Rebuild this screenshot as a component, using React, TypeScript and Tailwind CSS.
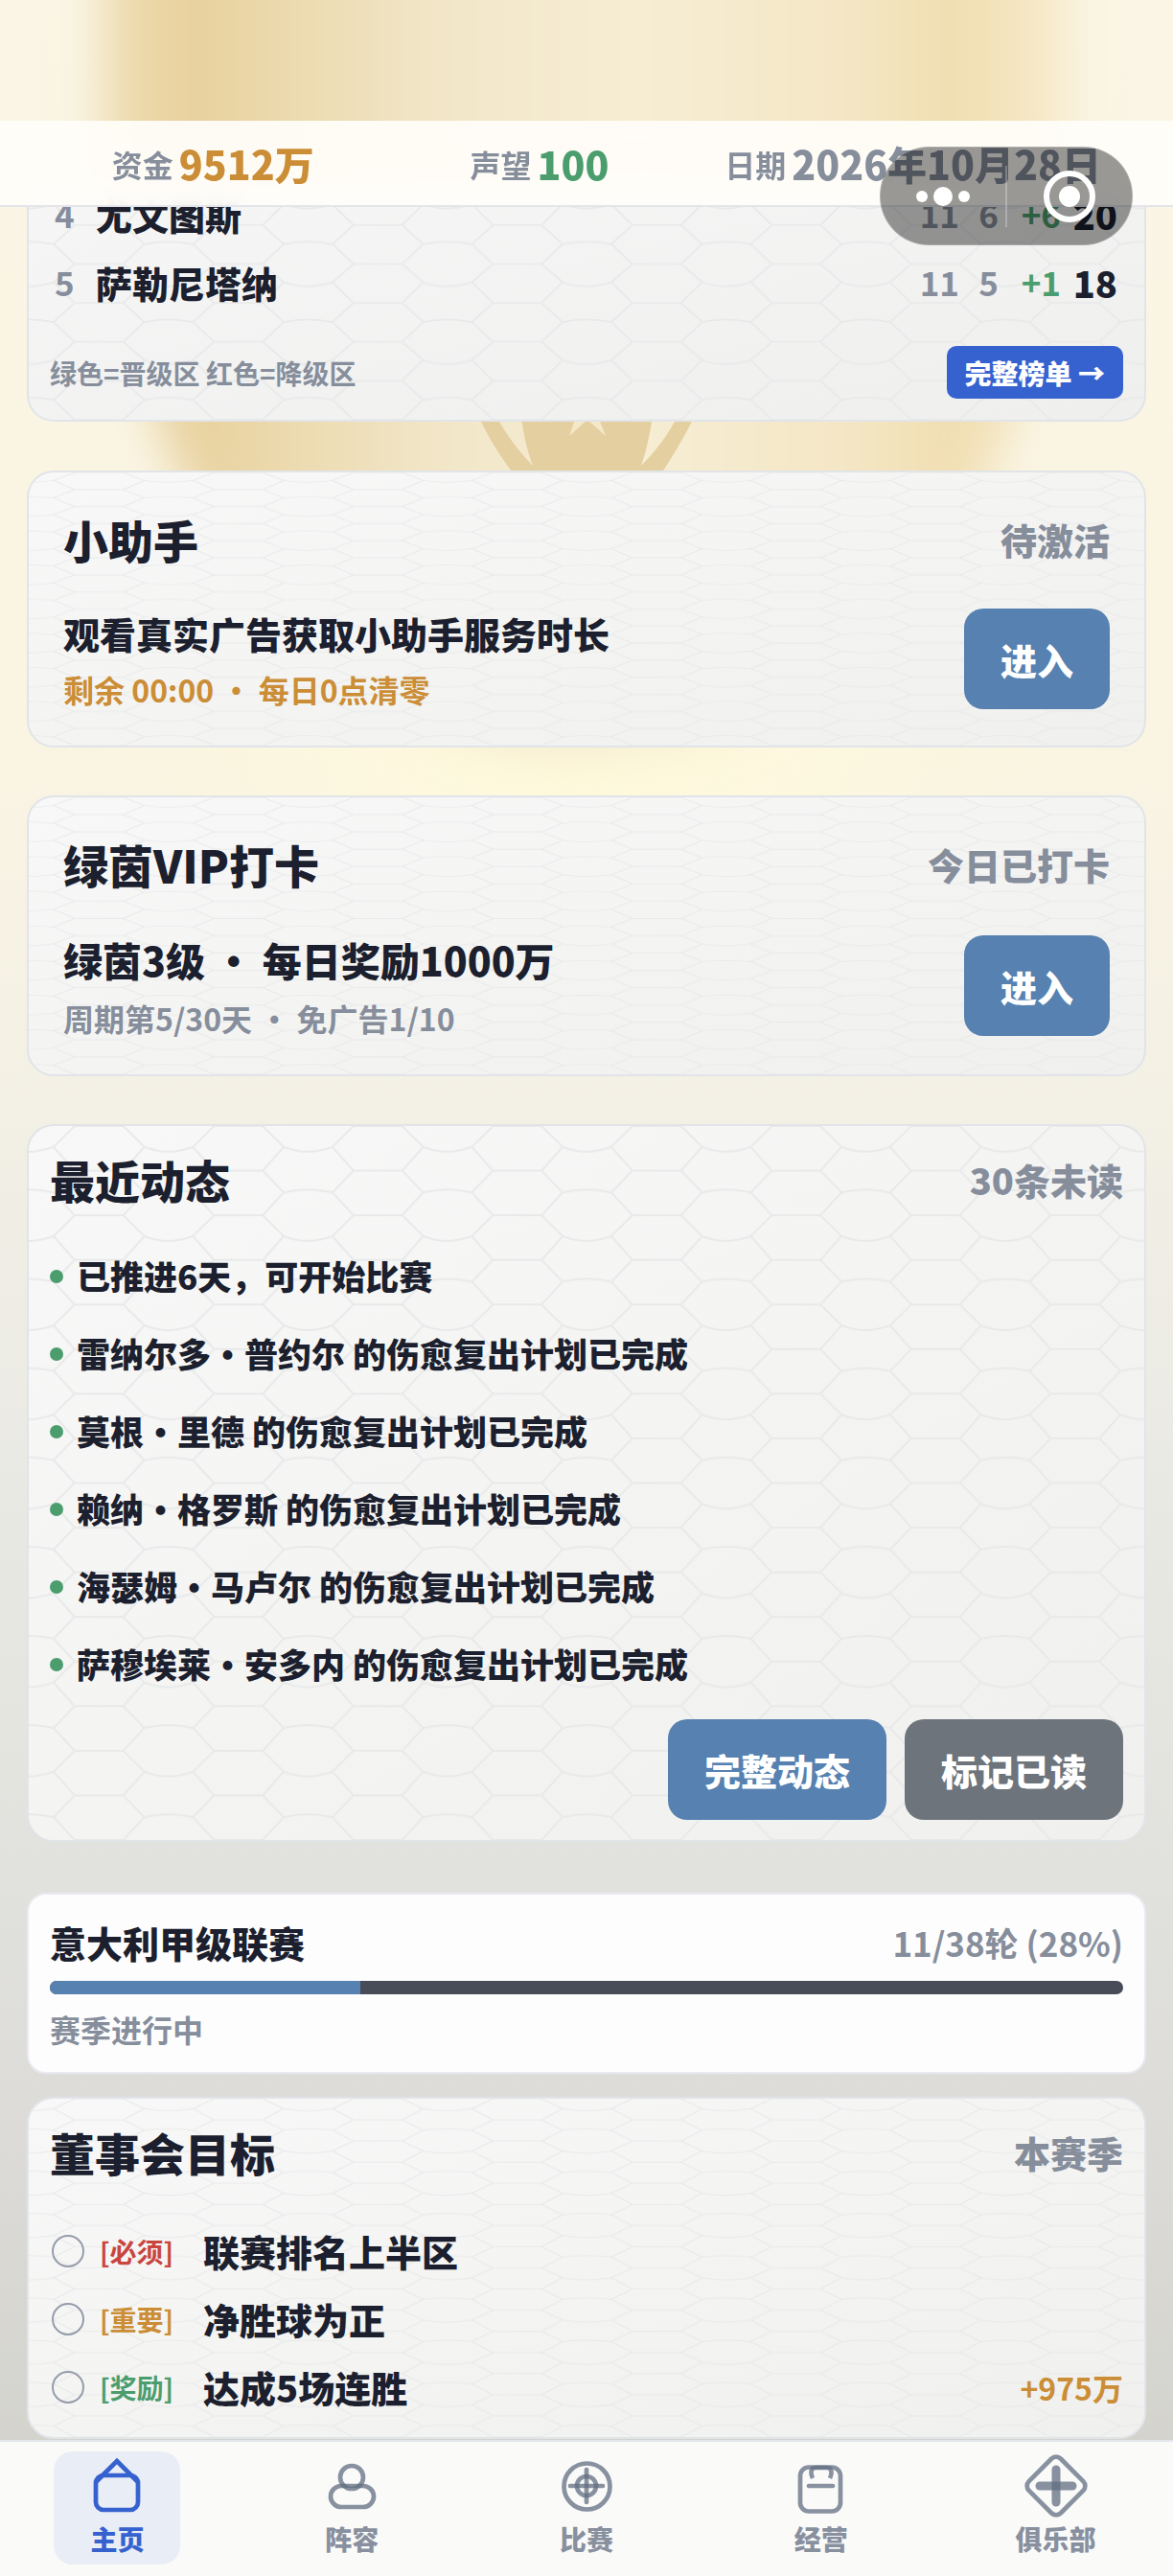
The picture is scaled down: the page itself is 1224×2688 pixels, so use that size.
import { useState } from "react";
import type { ReactNode } from "react";
import clsx from "clsx";

const equipos = [
    { pos: 4, nombre: "尤文图斯", pj: 11, pg: 6, dif: "+6", pts: 20 },
    { pos: 5, nombre: "萨勒尼塔纳", pj: 11, pg: 5, dif: "+1", pts: 18 },
];

const noticias = [
    "已推进6天，可开始比赛",
    "雷纳尔多・普约尔 的伤愈复出计划已完成",
    "莫根・里德 的伤愈复出计划已完成",
    "赖纳・格罗斯 的伤愈复出计划已完成",
    "海瑟姆・马卢尔 的伤愈复出计划已完成",
    "萨穆埃莱・安多内 的伤愈复出计划已完成",
];

const objetivos = [
    { id: "rank", tag: "[必须]", color: "text-[#c9453f]", texto: "联赛排名上半区", premio: "" },
    { id: "goals", tag: "[重要]", color: "text-[#cb8d35]", texto: "净胜球为正", premio: "" },
    { id: "streak", tag: "[奖励]", color: "text-[#4c9d6e]", texto: "达成5场连胜", premio: "+975万" },
];

// Textura hexagonal de las tarjetas: 8 x 8 celdas estiradas al tamaño
function HexTexture({ id, className = "h-full" }: { id: string; className?: string }) {
    return (
        <svg
            className={clsx("pointer-events-none absolute inset-x-0 bottom-0 w-full", className)}
            viewBox="0 0 1168 752"
            preserveAspectRatio="none"
            aria-hidden="true"
        >
            <defs>
                <pattern id={id} width="146" height="94" patternUnits="userSpaceOnUse">
                    <path
                        d="M48 0H99M48 94H99M48 47H99M48 0L26 22Q12 27 0 27M99 0L121 22Q134 27 146 27M26 22L48 47L26 70L48 94M121 22L99 47L121 70L99 94M26 70Q12 67 0 67M121 70Q134 67 146 67"
                        fill="none"
                        stroke="#e8e9e9"
                        strokeWidth="2"
                    />
                </pattern>
            </defs>
            <rect width="1168" height="752" fill={`url(#${id})`} />
        </svg>
    );
}

// Fondo con la copa dorada
function Backdrop() {
    return (
        <svg
            className="pointer-events-none absolute inset-x-0 top-0 h-[1200px] w-full"
            viewBox="0 0 1224 1200"
            preserveAspectRatio="xMidYMin slice"
            aria-hidden="true"
        >
            <defs>
                <linearGradient id="cup" x1="0" x2="1">
                    <stop offset="0" stopColor="#f0e0b6" />
                    <stop offset="0.09" stopColor="#e7d09c" />
                    <stop offset="0.2" stopColor="#ecdbb0" />
                    <stop offset="0.35" stopColor="#f2e6c8" />
                    <stop offset="0.55" stopColor="#f6edd4" />
                    <stop offset="0.78" stopColor="#f4e6c4" />
                    <stop offset="0.88" stopColor="#f1ddb0" />
                    <stop offset="1" stopColor="#f7edcf" />
                </linearGradient>
                <radialGradient id="glow">
                    <stop offset="0" stopColor="#fffadc" />
                    <stop offset="1" stopColor="#fffadc" stopOpacity="0" />
                </radialGradient>
                <filter id="soft" x="-20%" y="-20%" width="140%" height="140%">
                    <feGaussianBlur stdDeviation="24" />
                </filter>
            </defs>
            <ellipse cx="612" cy="800" rx="560" ry="260" fill="url(#glow)" />
            <path
                d="M105 -80 V180 C115 330 170 500 260 600 C380 740 500 785 612 790 C724 785 850 740 960 600 C1050 500 1110 330 1118 180 V-80Z"
                fill="url(#cup)"
                filter="url(#soft)"
            />
            <path d="M494 420Q506 456 540 500H686Q716 456 731 420H713Q700 455 669 486Q678 460 683 420H542Q546 460 556 486Q526 455 511 420Z" fill="#e3cfa0" />
            <path d="M612 405L623 432L632 455L613 438L594 455L602 432Z" fill="#f5e8c8" />
        </svg>
    );
}

function Card({ id, className, children }: { id: string; className?: string; children: ReactNode }) {
    return (
        <section
            className={clsx(
                "relative overflow-hidden rounded-[28px] border-2 border-[#e1e4e8] bg-linear-to-br from-[#f8f8f8] to-[#f0f0ee]",
                className
            )}
        >
            <HexTexture id={id} />
            <div className="relative">{children}</div>
        </section>
    );
}

function CardTitle({ title, note }: { title: string; note: string }) {
    return (
        <div className="flex items-center justify-between leading-[70px]">
            <h2 className="text-[47px]">{title}</h2>
            <span className="text-[38px] text-[#868e9c]">{note}</span>
        </div>
    );
}

function ActionButton({ children, gray }: { children: ReactNode; gray?: boolean }) {
    return (
        <button
            type="button"
            className={clsx(
                "h-[105px] shrink-0 rounded-[20px] px-[38px] text-[38px] text-white",
                gray ? "bg-[#6d747c]" : "bg-[#5681b0]"
            )}
        >
            {children}
        </button>
    );
}

const tabs = [
    {
        label: "主页",
        icon: (
            <>
                <rect x="8" y="19" width="44" height="36" rx="8" />
                <path d="M7 27L30 4L53 27" />
            </>
        ),
    },
    {
        label: "阵容",
        icon: (
            <>
                <circle cx="30" cy="21" r="12" />
                <rect x="8" y="30" width="45" height="22" rx="11" />
            </>
        ),
    },
    {
        label: "比赛",
        icon: (
            <>
                <circle cx="30.5" cy="30.5" r="24" />
                <circle cx="30" cy="30" r="10" />
                <path d="M30 13V47" strokeLinecap="round" />
                <path d="M13 30H47" strokeLinecap="round" />
            </>
        ),
    },
    {
        label: "经营",
        icon: (
            <>
                <rect x="8" y="10.5" width="42" height="46" rx="9" />
                <path d="M21 22Q19 18 19.500 15Q20 11 24 11H36Q40 11 40.500 15Q41 18 39 22" />
                <path d="M17 30H42" strokeLinecap="round" />
            </>
        ),
    },
    {
        label: "俱乐部",
        icon: (
            <>
                <rect x="6.500" y="6.500" width="47" height="47" rx="7" transform="rotate(45 30 30)" />
                <path d="M30 13V47" strokeWidth="9" strokeLinecap="round" />
                <path d="M13 30H47" strokeWidth="9" strokeLinecap="round" />
            </>
        ),
    },
];

export default function App() {
    const [activeTab, setActiveTab] = useState("主页");

    return (
        <div className="relative flex min-h-screen flex-col bg-[linear-gradient(to_bottom,#faf5e5_0%,#faf4e2_28%,#f3f0e5_43%,#e9e9e4_58%,#e1e1dd_73%,#dcdbd8_83%,#d3d3cc_96%)] font-['Noto_Sans_CJK_SC',sans-serif] font-black text-[#1c1f2e]">
            <Backdrop />

            {/* Barra superior */}
            <header className="relative z-10 mt-[126px] flex h-[90px] items-center border-b-2 border-[#e3e5ea] bg-[#fffdf9]/95 px-[52px] pt-[2px] whitespace-nowrap backdrop-blur-sm">
                <div className="flex flex-1 items-center justify-center gap-[6px] px-[23px]">
                    <span className="text-[32px] font-bold text-[#868e9c]">资金</span>
                    <span className="text-[41px] text-[#cb8d35]">9512万</span>
                </div>
                <div className="flex flex-1 items-center justify-center gap-[6px] px-[23px]">
                    <span className="text-[32px] font-bold text-[#868e9c]">声望</span>
                    <span className="text-[41px] text-[#4c9d6e]">100</span>
                </div>
                <div className="flex flex-1 items-center justify-center gap-[6px] px-[23px] text-[#868e9c]">
                    <span className="text-[32px] font-bold">日期</span>
                    <span className="text-[41px]">2026年10月28日</span>
                </div>
            </header>

            {/* Cápsula de la mini app */}
            <div className="absolute top-[153px] right-[42px] z-20 flex h-[103px] w-[264px] items-center rounded-full border border-white/20 bg-black/40">
                <button type="button" aria-label="更多" className="flex flex-1 items-center justify-center gap-[6px]">
                    <span className="size-3 rounded-full bg-white" />
                    <span className="size-5 rounded-full bg-white" />
                    <span className="size-3 rounded-full bg-white" />
                </button>
                <span className="h-16 w-[2px] bg-white/25" />
                <button type="button" aria-label="关闭" className="flex flex-1 items-center justify-center">
                    <span className="flex size-[54px] items-center justify-center rounded-full border-[6px] border-white">
                        <span className="size-[22px] rounded-full bg-white" />
                    </span>
                </button>
            </div>

            <main className="relative flex flex-1 flex-col px-7">
                {/* Clasificación */}
                <section className="relative -mt-7 overflow-hidden rounded-b-[28px] border-2 border-t-0 border-[#e1e4e8] bg-linear-to-br from-[#f6f6f6] to-[#efefee] px-[22px] pb-[22px]">
                    <HexTexture id="hex-table" className="h-[650px]" />
                    <table className="relative w-full">
                        <tbody>
                            {equipos.map((equipo) => (
                                <tr key={equipo.pos} className="h-[71px] text-right text-[35px] font-bold text-[#868e9c]">
                                    <td className="w-12 pl-[5px] text-left">{equipo.pos}</td>
                                    <td className="text-left text-[38px] font-black text-[#1c1f2e]">{equipo.nombre}</td>
                                    <td className="w-12">{equipo.pj}</td>
                                    <td className="w-[41px]">{equipo.pg}</td>
                                    <td className="w-[65px] text-[#4c9d6e]">{equipo.dif}</td>
                                    <td className="w-[65px] pr-[6px] text-[38px] font-black text-[#1c1f2e]">{equipo.pts}</td>
                                </tr>
                            ))}
                        </tbody>
                    </table>
                    <div className="relative mt-[31px] flex items-center justify-between text-[28px]">
                        <span className="font-bold text-[#868e9c]">绿色=晋级区 红色=降级区</span>
                        <button type="button" className="h-[55px] rounded-[10px] bg-[#3662d0] px-[19px] text-white">
                            完整榜单 →
                        </button>
                    </div>
                </section>

                {/* Asistente */}
                <Card id="hex-helper" className="mt-[51px] px-9 py-[35px]">
                    <CardTitle title="小助手" note="待激活" />
                    <div className="mt-[34px] flex items-center justify-between">
                        <div>
                            <p className="text-[38px] leading-[57px]">观看真实广告获取小助手服务时长</p>
                            <p className="mt-[6px] text-[32px] leading-[48px] font-bold text-[#cb8d35]">剩余 00:00 · 每日0点清零</p>
                        </div>
                        <ActionButton>进入</ActionButton>
                    </div>
                </Card>

                {/* VIP */}
                <Card id="hex-vip" className="mt-[50px] px-9 py-[35px]">
                    <CardTitle title="绿茵VIP打卡" note="今日已打卡" />
                    <div className="mt-[34px] flex items-center justify-between">
                        <div>
                            <p className="text-[41px] leading-[61px]">绿茵3级 · 每日奖励1000万</p>
                            <p className="mt-[6px] text-[32px] leading-[48px] font-bold text-[#868e9c]">周期第5/30天 · 免广告1/10</p>
                        </div>
                        <ActionButton>进入</ActionButton>
                    </div>
                </Card>

                {/* Novedades */}
                <Card id="hex-news" className="mt-[50px] px-[22px] py-[21px]">
                    <CardTitle title="最近动态" note="30条未读" />
                    <ul className="mt-[25px]">
                        {noticias.map((noticia) => (
                            <li key={noticia} className="flex h-[81px] items-center gap-[14px] text-[35px]">
                                <span className="size-[14px] rounded-full bg-[#4c9d6e]" />
                                {noticia}
                            </li>
                        ))}
                    </ul>
                    <div className="mt-[17px] flex justify-end gap-[19px]">
                        <ActionButton>完整动态</ActionButton>
                        <ActionButton gray>标记已读</ActionButton>
                    </div>
                </Card>

                {/* Progreso de la liga */}
                <section className="mt-[53px] rounded-[20px] border-2 border-[#e8eaf1] bg-[#fdfdfd] px-[22px] py-[21px]">
                    <div className="flex items-center justify-between leading-[57px]">
                        <h2 className="text-[38px]">意大利甲级联赛</h2>
                        <span className="text-[35px] font-bold text-[#868e9c]">11/38轮 (28%)</span>
                    </div>
                    <div className="mt-3 h-[14px] overflow-hidden rounded-full bg-[#484c58]">
                        <div className="h-full bg-[#5681b0]" style={{ width: `${(11 / 38) * 100}%` }} />
                    </div>
                    <p className="mt-3 text-[32px] leading-[48px] font-bold text-[#868e9c]">赛季进行中</p>
                </section>

                {/* Objetivos */}
                <Card id="hex-goals" className="mt-6 px-[22px] pt-[21px] pb-[17px]">
                    <CardTitle title="董事会目标" note="本赛季" />
                    <ul className="mt-8">
                        {objetivos.map((objetivo) => (
                            <li key={objetivo.id} className="flex h-[71px] items-center">
                                <input
                                    id={objetivo.id}
                                    type="checkbox"
                                    className="ml-[2px] size-[34px] appearance-none rounded-full border-2 border-[#959caa] checked:bg-[#4c9d6e]"
                                />
                                <label htmlFor={objetivo.id} className="flex flex-1 items-center pl-4 text-[38px]">
                                    <span className={clsx("w-[108px] text-[28px] font-bold", objetivo.color)}>{objetivo.tag}</span>
                                    {objetivo.texto}
                                </label>
                                <span className="text-[32px] font-bold text-[#cb8d35]">{objetivo.premio}</span>
                            </li>
                        ))}
                    </ul>
                </Card>
            </main>

            {/* Navegación */}
            <nav className="sticky bottom-0 z-10 flex h-[142px] border-t-2 border-[#e3e6ec] bg-[#fafaf9]">
                {tabs.map((tab) => (
                    <div key={tab.label} className="flex flex-1 justify-center pt-[10px]">
                        <button
                            type="button"
                            onClick={() => setActiveTab(tab.label)}
                            className={clsx(
                                "flex h-[118px] w-[132px] flex-col items-center gap-1 rounded-[20px] pt-[6px] text-[28px] leading-[42px]",
                                activeTab === tab.label ? "bg-[#e8edf6] text-[#3662cf]" : "text-[#626d82]/75"
                            )}
                        >
                            <svg
                                className="size-[60px] shrink-0 overflow-visible"
                                viewBox="0 0 60 60"
                                fill="none"
                                stroke="currentColor"
                                strokeWidth="4.7"
                                aria-hidden="true"
                            >
                                {tab.icon}
                            </svg>
                            {tab.label}
                        </button>
                    </div>
                ))}
            </nav>
        </div>
    );
}
